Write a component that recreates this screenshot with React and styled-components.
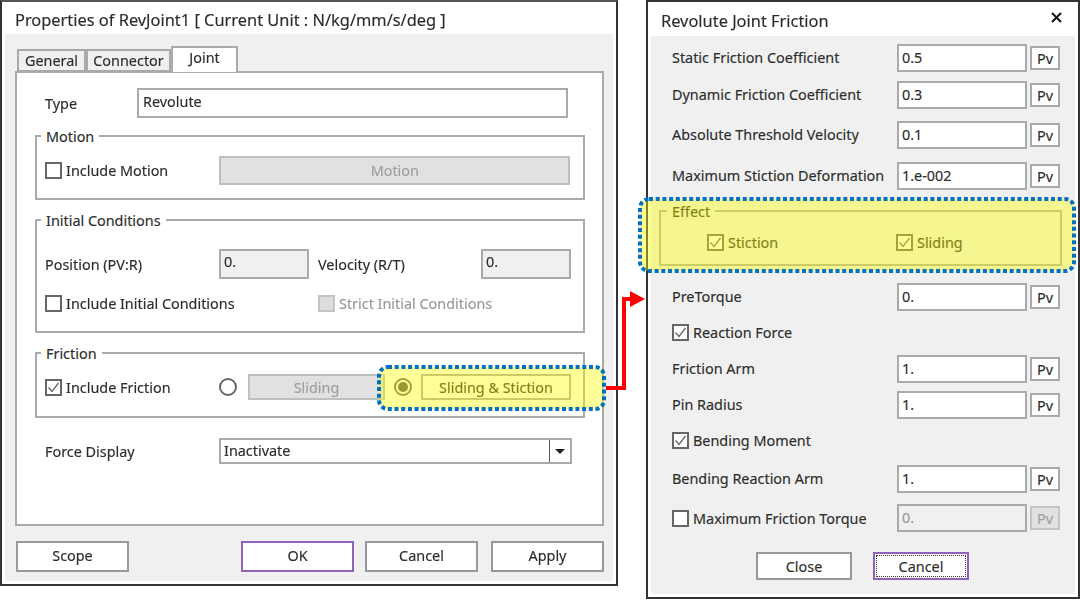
import React from 'react'
import styled, { createGlobalStyle } from 'styled-components'

const GlobalStyle = createGlobalStyle`
	html, body {
		margin: 0;
		background: #fff;
	}
	body {
		font-family: "Noto Sans", "Open Sans", sans-serif;
		font-size: 14.4px;
		color: #2c2c2c;
		-webkit-text-stroke: 0.15px;
	}
`

function Check({ checked, disabled, tone }) {
	return (
		<CheckBox $disabled={disabled} $tone={tone}>
			{checked && (
				<svg width="13" height="13" viewBox="0 0 13 13">
					<path d="M1.5 6.5 L5 10.5 L11.5 2" fill="none" stroke={tone || '#666'} strokeWidth="1.3" />
				</svg>
			)}
		</CheckBox>
	)
}

function FieldRow({ label, value, top, disabled, check }) {
	return (
		<Row $top={top}>
			{check ? (
				<CheckLabel $left={13} $width={225}><Check />{label}</CheckLabel>
			) : (
				<RowLabel>{label}</RowLabel>
			)}
			<FieldInput $disabled={disabled}>{value}</FieldInput>
			<PvButton $disabled={disabled}>Pv</PvButton>
		</Row>
	)
}

function Highlight({ x, y, w, h }) {
	return (
		<Marker $x={x} $y={y} width={w} height={h}>
			<rect
				x="2"
				y="2"
				width={w - 4}
				height={h - 4}
				rx="9"
				fill="rgba(255, 255, 0, 0.4)"
				stroke="#0070c0"
				strokeWidth="4"
				strokeDasharray="4 2.7"
			/>
		</Marker>
	)
}

function App() {
	return (
		<Stage>
			<GlobalStyle />
			<LeftWindow>
				<Title>Properties of RevJoint1 [ Current Unit : N/kg/mm/s/deg ]</Title>
				<LeftBody>
					<Tabs>
						<Tab $width={69}>General</Tab>
						<Tab $width={85}>Connector</Tab>
						<Tab $width={67} $active>Joint</Tab>
					</Tabs>
					<TabPanel>
						<TypeRow>
							<TypeLabel>Type</TypeLabel>
							<TextBox $width={431} $height={30}>Revolute</TextBox>
						</TypeRow>

						<Group $top={17} $height={65}>
							<Legend>Motion</Legend>
							<GroupRow $top={19}>
								<CheckLabel><Check />Include Motion</CheckLabel>
								<GreyButton $left={51} $width={351} $height={29}>Motion</GreyButton>
							</GroupRow>
						</Group>

						<Group $top={19} $height={114}>
							<Legend>Initial Conditions</Legend>
							<GroupRow $top={28}>
								<PosLabel>Position (PV:R)</PosLabel>
								<ReadBox>0.</ReadBox>
								<VelLabel>Velocity (R/T)</VelLabel>
								<ReadBox>0.</ReadBox>
							</GroupRow>
							<GroupRow $top={10}>
								<CheckLabel $width={273}><Check />Include Initial Conditions</CheckLabel>
								<CheckLabel $muted><Check disabled />Strict Initial Conditions</CheckLabel>
							</GroupRow>
						</Group>

						<Group $top={19} $height={66}>
							<Legend>Friction</Legend>
							<GroupRow $top={19}>
								<CheckLabel $width={174}><Check checked />Include Friction</CheckLabel>
								<Radio />
								<GreyButton $left={11} $width={137} $height={26}>Sliding</GreyButton>
								<Radio $left={9} $selected />
								<WhiteButton>Sliding &amp; Stiction</WhiteButton>
							</GroupRow>
						</Group>

						<ForceRow>
							<ForceLabel>Force Display</ForceLabel>
							<Select>
								<span>Inactivate</span>
								<SelectArrow><i /></SelectArrow>
							</Select>
						</ForceRow>
					</TabPanel>
					<LeftFooter>
						<FootButton>Scope</FootButton>
						<FootGroup>
							<FootButton $focus>OK</FootButton>
							<FootButton>Cancel</FootButton>
							<FootButton>Apply</FootButton>
						</FootGroup>
					</LeftFooter>
				</LeftBody>
			</LeftWindow>

			<RightWindow>
				<RightTitle>
					<span>Revolute Joint Friction</span>
					<CloseGlyph width="11" height="11" viewBox="0 0 11 11">
						<path d="M1 1 L10 10 M10 1 L1 10" stroke="#111" strokeWidth="2" />
					</CloseGlyph>
				</RightTitle>
				<RightBody>
					<FieldRow top={8} label="Static Friction Coefficient" value="0.5" />
					<FieldRow top={9} label="Dynamic Friction Coefficient" value="0.3" />
					<FieldRow top={12} label="Absolute Threshold Velocity" value="0.1" />
					<FieldRow top={13} label="Maximum Stiction Deformation" value="1.e-002" />
					<EffectGroup>
						<Legend $left={6} $tint="#efefef">Effect</Legend>
						<EffectRow>
							<CheckLabel $width={189}><Check checked />Stiction</CheckLabel>
							<CheckLabel><Check checked />Sliding</CheckLabel>
						</EffectRow>
					</EffectGroup>
					<FieldRow top={17} label="PreTorque" value="0." />
					<CheckRow $top={7}><CheckLabel><Check checked />Reaction Force</CheckLabel></CheckRow>
					<FieldRow top={9} label="Friction Arm" value="1." />
					<FieldRow top={8} label="Pin Radius" value="1." />
					<CheckRow $top={7}><CheckLabel><Check checked />Bending Moment</CheckLabel></CheckRow>
					<FieldRow top={11} label="Bending Reaction Arm" value="1." />
					<FieldRow top={11} label="Maximum Friction Torque" value="0." check disabled />
					<RightFooter>
						<DialogButton>Close</DialogButton>
						<DialogButton $focus>Cancel</DialogButton>
					</RightFooter>
				</RightBody>
			</RightWindow>

			<Highlight x={377} y={365} w={229} h={46} />
			<Highlight x={638} y={197} w={438} h={76} />
			<Arrow width="50" height="110" viewBox="0 0 50 110">
				<path d="M2 91 H20 V2 H28" fill="none" stroke="#f00" strokeWidth="4" />
				<path d="M26 -6 L41 2 L26 10 Z" fill="#f00" />
			</Arrow>
		</Stage>
	)
}
export default App

const Stage = styled.div`
	position: relative;
	width: 1080px;
	height: 600px;
	display: flex;
	align-items: flex-start;
	overflow: hidden;
	filter: blur(0.3px);
`
const LeftWindow = styled.div`
	width: 618px;
	height: 586px;
	box-sizing: border-box;
	border: 2px solid #333;
	border-top-color: #555;
	background: #fff;
	display: flex;
	flex-direction: column;
`
const Title = styled.div`
	height: 32px;
	flex: none;
	padding: 4px 0 0 13px;
	box-sizing: border-box;
	font-size: 16.4px;
	line-height: 28px;
	white-space: nowrap;
`
const LeftBody = styled.div`
	flex: 1;
	margin: 0 3px 3px;
	padding: 13px 8px 0 10px;
	background: #f0f0f0;
	display: flex;
	flex-direction: column;
`
const Tabs = styled.div`
	display: flex;
	align-items: flex-end;
	height: 25px;
	padding-left: 2px;
	position: relative;
	z-index: 1;
	margin-bottom: -1px;
`
const Tab = styled.div`
	box-sizing: border-box;
	width: ${p => p.$width}px;
	height: ${p => (p.$active ? '26px' : '23px')};
	padding-bottom: ${p => (p.$active ? '5px' : '0')};
	background: ${p => (p.$active ? '#fff' : '#f0f0f0')};
	border: 2px solid #aaa;
	border-bottom: ${p => (p.$active ? '0' : '2px solid #aaa')};
	line-height: 20px;
	text-align: center;
	white-space: nowrap;
`
const TabPanel = styled.div`
	box-sizing: border-box;
	width: 589px;
	height: 455px;
	padding: 15px 18px 0 18px;
	background: #fff;
	border: 2px solid #aaa;
`
const TypeRow = styled.div`
	display: flex;
	align-items: center;
	height: 30px;
`
const TypeLabel = styled.div`
	width: 102px;
	padding-left: 10px;
	box-sizing: border-box;
`
const TextBox = styled.div`
	box-sizing: border-box;
	width: ${p => p.$width}px;
	height: ${p => p.$height}px;
	padding: 0 4px 3px;
	display: flex;
	align-items: center;
	background: #fff;
	border: 2px solid #aaa;
`
const Group = styled.div`
	position: relative;
	box-sizing: border-box;
	width: 550px;
	height: ${p => p.$height}px;
	margin-top: ${p => p.$top}px;
	padding: 0 8px;
	border: 2px solid #aaa;
`
const Legend = styled.div`
	position: absolute;
	top: -10px;
	left: ${p => p.$left || 4}px;
	padding: 0 5px;
	line-height: 20px;
	background: ${p => p.$tint || '#fff'};
`
const GroupRow = styled.div`
	display: flex;
	align-items: center;
	min-height: 28px;
	margin-top: ${p => p.$top}px;
`
const CheckLabel = styled.label`
	display: flex;
	align-items: center;
	flex: none;
	gap: 4px;
	width: ${p => (p.$width ? `${p.$width}px` : 'auto')};
	margin-left: ${p => p.$left || 0}px;
	color: ${p => (p.$muted ? '#999' : '#2c2c2c')};
	white-space: nowrap;
`
const CheckBox = styled.span`
	box-sizing: border-box;
	flex: none;
	width: 17px;
	height: 17px;
	background: ${p => (p.$disabled ? '#ddd' : '#fff')};
	border: 2px solid ${p => (p.$disabled ? '#c4c4c4' : '#666')};
	svg {
		display: block;
	}
`
const GreyButton = styled.div`
	box-sizing: border-box;
	flex: none;
	width: ${p => p.$width}px;
	height: ${p => p.$height}px;
	margin-left: ${p => p.$left}px;
	display: flex;
	align-items: center;
	justify-content: center;
	background: #e1e1e1;
	border: 2px solid #bfbfbf;
	color: #a0a0a0;
`
const PosLabel = styled.div`
	width: 174px;
`
const VelLabel = styled.div`
	width: 172px;
	padding-left: 9px;
	box-sizing: border-box;
`
const ReadBox = styled.div`
	box-sizing: border-box;
	flex: none;
	width: 90px;
	height: 30px;
	padding: 0 3px 5px;
	display: flex;
	align-items: center;
	background: #f0f0f0;
	border: 2px solid #aaa;
`
const Radio = styled.span`
	box-sizing: border-box;
	flex: none;
	width: 18px;
	height: 18px;
	margin-left: ${p => p.$left || 0}px;
	border-radius: 50%;
	border: 2px solid #666;
	background: #fff;
	&::after {
		content: '';
		display: ${p => (p.$selected ? 'block' : 'none')};
		width: 10px;
		height: 10px;
		margin: 2px;
		border-radius: 50%;
		background: #555;
	}
`
const WhiteButton = styled.div`
	box-sizing: border-box;
	flex: none;
	width: 150px;
	height: 26px;
	margin-left: 9px;
	display: flex;
	align-items: center;
	justify-content: center;
	background: #fff;
	border: 2px solid #aaa;
`
const ForceRow = styled.div`
	display: flex;
	align-items: center;
	height: 26px;
	margin-top: 20px;
	padding-left: 10px;
`
const ForceLabel = styled.div`
	width: 174px;
`
const Select = styled.div`
	box-sizing: border-box;
	width: 353px;
	height: 26px;
	display: flex;
	align-items: center;
	justify-content: space-between;
	padding-left: 3px;
	background: #fff;
	border: 2px solid #aaa;
	span {
		padding-bottom: 2px;
	}
`
const SelectArrow = styled.div`
	width: 20px;
	height: 100%;
	display: flex;
	align-items: center;
	justify-content: center;
	border-left: 1px solid #555;
	i {
		width: 0;
		height: 0;
		border: 5px solid transparent;
		border-top: 5px solid #222;
		border-bottom: 0;
	}
`
const LeftFooter = styled.div`
	display: flex;
	justify-content: space-between;
	width: 589px;
	margin-top: 15px;
	padding-left: 1px;
	box-sizing: border-box;
`
const FootGroup = styled.div`
	display: flex;
	gap: 11px;
	> :last-child {
		margin-left: 2px;
	}
`
const FootButton = styled.div`
	box-sizing: border-box;
	width: 113px;
	height: 31px;
	padding-bottom: 3px;
	display: flex;
	align-items: center;
	justify-content: center;
	background: #fff;
	border: 2px solid ${p => (p.$focus ? '#8f63b5' : '#999')};
`
const RightWindow = styled.div`
	box-sizing: border-box;
	width: 434px;
	height: 599px;
	margin-left: 28px;
	border: 2px solid #333;
	background: #fff;
	display: flex;
	flex-direction: column;
`
const RightTitle = styled.div`
	flex: none;
	height: 34px;
	box-sizing: border-box;
	display: flex;
	align-items: center;
	justify-content: space-between;
	padding: 2px 16px 0 13px;
	font-size: 16.4px;
`
const CloseGlyph = styled.svg`
	margin-top: -6px;
`
const RightBody = styled.div`
	flex: 1;
	margin: 0 3px 3px;
	padding: 0 0 0 8px;
	background: #f0f0f0;
`
const Row = styled.div`
	display: flex;
	align-items: center;
	height: 28px;
	margin-top: ${p => p.$top}px;
`
const RowLabel = styled.div`
	width: 238px;
	flex: none;
	padding-left: 13px;
	padding-bottom: 1px;
	box-sizing: border-box;
	white-space: nowrap;
`
const FieldInput = styled.div`
	box-sizing: border-box;
	flex: none;
	width: 130px;
	height: 28px;
	padding: 0 3px 2px;
	display: flex;
	align-items: center;
	background: ${p => (p.$disabled ? '#f0f0f0' : '#fff')};
	border: 2px solid #aaa;
	color: ${p => (p.$disabled ? '#999' : '#2c2c2c')};
`
const PvButton = styled.div`
	box-sizing: border-box;
	flex: none;
	width: 30px;
	height: 24px;
	margin-left: 3px;
	display: flex;
	align-items: center;
	justify-content: center;
	background: ${p => (p.$disabled ? '#e1e1e1' : '#fff')};
	border: 2px solid ${p => (p.$disabled ? '#c4c4c4' : '#aaa')};
	color: ${p => (p.$disabled ? '#a0a0a0' : '#2c2c2c')};
`
const EffectGroup = styled.div`
	position: relative;
	box-sizing: border-box;
	width: 403px;
	height: 56px;
	margin-top: 20px;
	border: 2px solid #aaa;
`
const EffectRow = styled.div`
	display: flex;
	align-items: center;
	margin-top: 21px;
	padding-left: 46px;
`
const CheckRow = styled.div`
	display: flex;
	align-items: center;
	height: 28px;
	margin-top: ${p => p.$top}px;
	padding-left: 13px;
`
const RightFooter = styled.div`
	display: flex;
	gap: 21px;
	padding-left: 97px;
	margin-top: 20px;
`
const DialogButton = styled.div`
	box-sizing: border-box;
	width: 96px;
	height: 28px;
	display: flex;
	align-items: center;
	justify-content: center;
	background: #fff;
	border: 2px solid ${p => (p.$focus ? '#8f63b5' : '#999')};
	outline: ${p => (p.$focus ? '1px dotted #333' : 'none')};
	outline-offset: -4px;
`
const Marker = styled.svg`
	position: absolute;
	left: ${p => p.$x}px;
	top: ${p => p.$y}px;
`
const Arrow = styled.svg`
	position: absolute;
	left: 604px;
	top: 297px;
	overflow: visible;
`
